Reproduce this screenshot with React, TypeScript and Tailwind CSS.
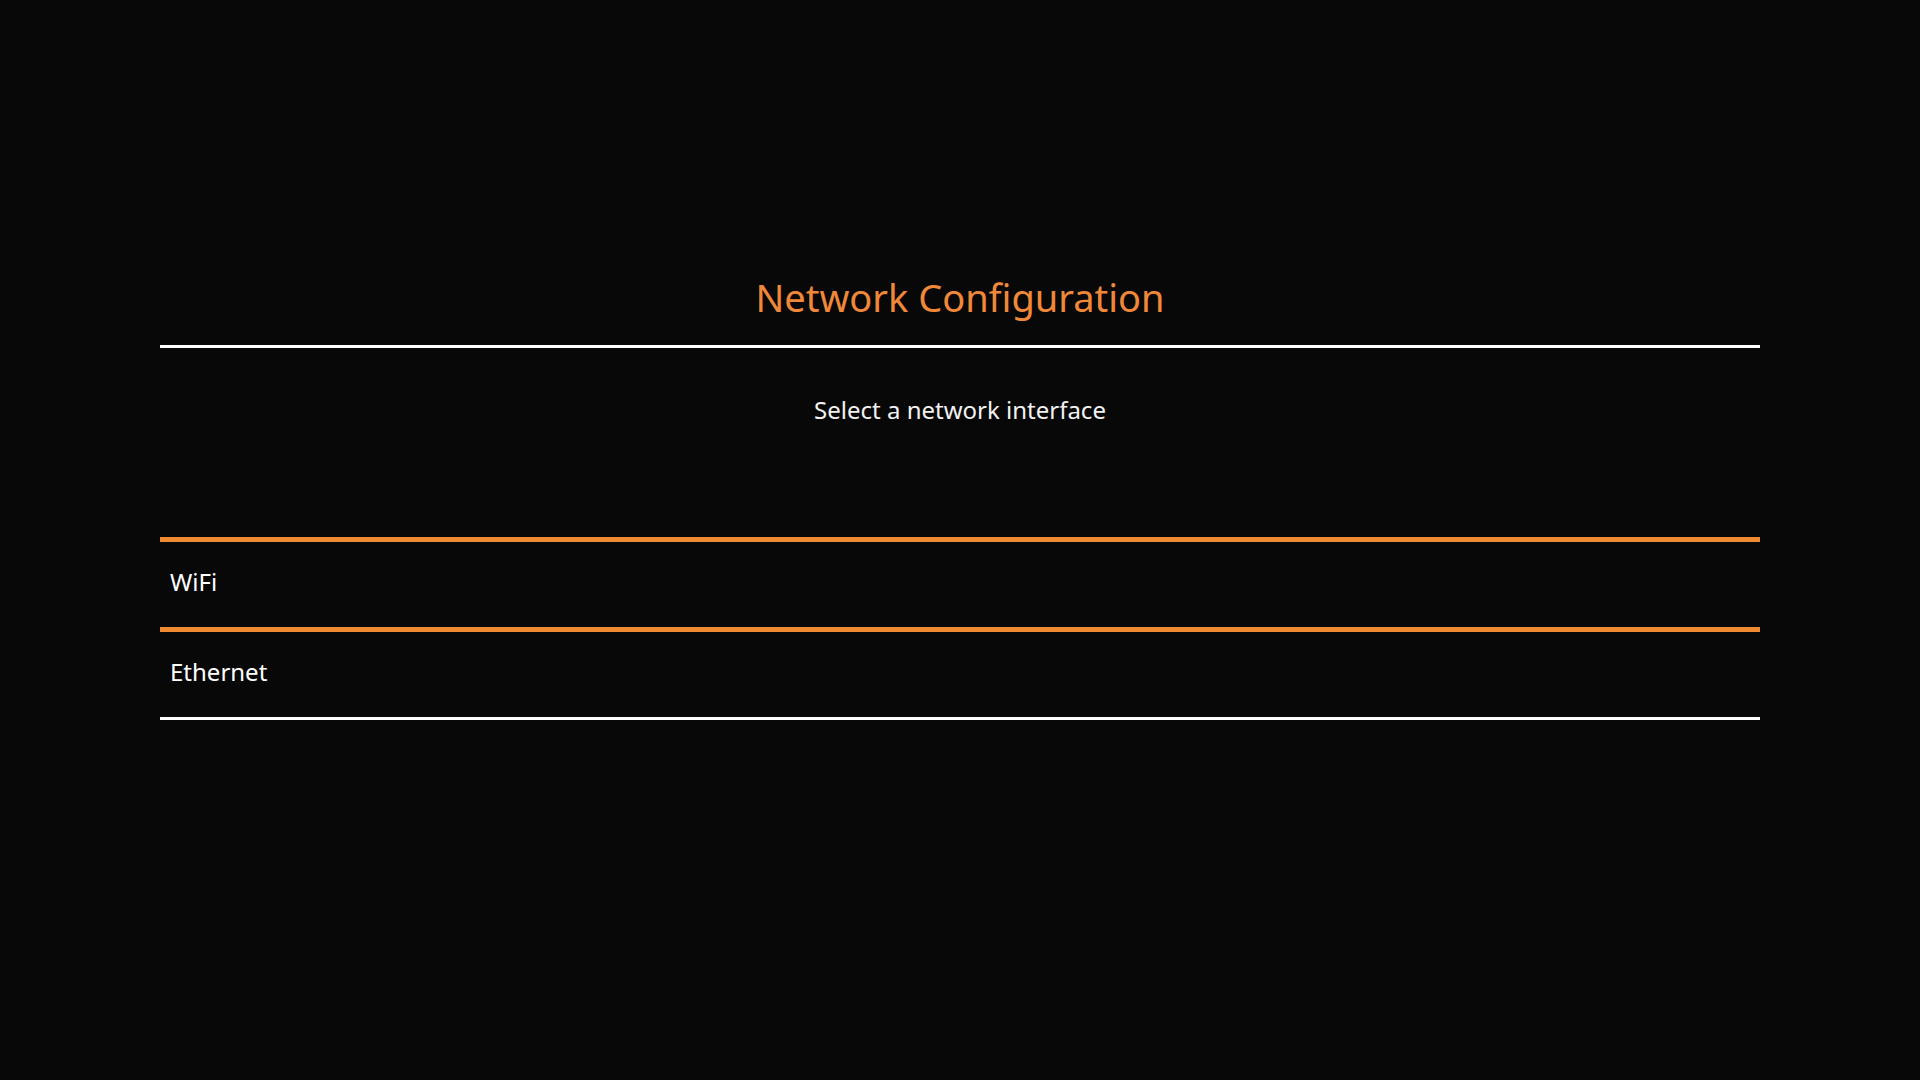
export default function App() {
  const items = ["WiFi", "Ethernet"];

  return (
    <div
      className="min-h-screen w-full bg-[#080808] text-white"
      style={{ fontFamily: "'Noto Sans', sans-serif" }}
    >
      <div className="px-[160px] pt-[273px]">
        {/* Header */}
        <h1 className="text-center text-[38px] leading-[48px] text-[#f0883a]">
          Network Configuration
        </h1>
        <div className="mt-[24px] h-[3px] bg-white" />

        <p className="mt-[47px] text-center text-[24px] leading-[30px] text-[#f2f2f2]">
          Select a network interface
        </p>

        {/* Interface list */}
        <div className="mt-[112px] border-b-[3px] border-white">
          {items.map((item) => (
            <button
              key={item}
              className="block h-[90px] w-full border-t-[5px] border-[#f08a32] px-[10px] pb-[6px] text-left text-[24px] text-white"
            >
              {item}
            </button>
          ))}
        </div>
      </div>
    </div>
  );
}
